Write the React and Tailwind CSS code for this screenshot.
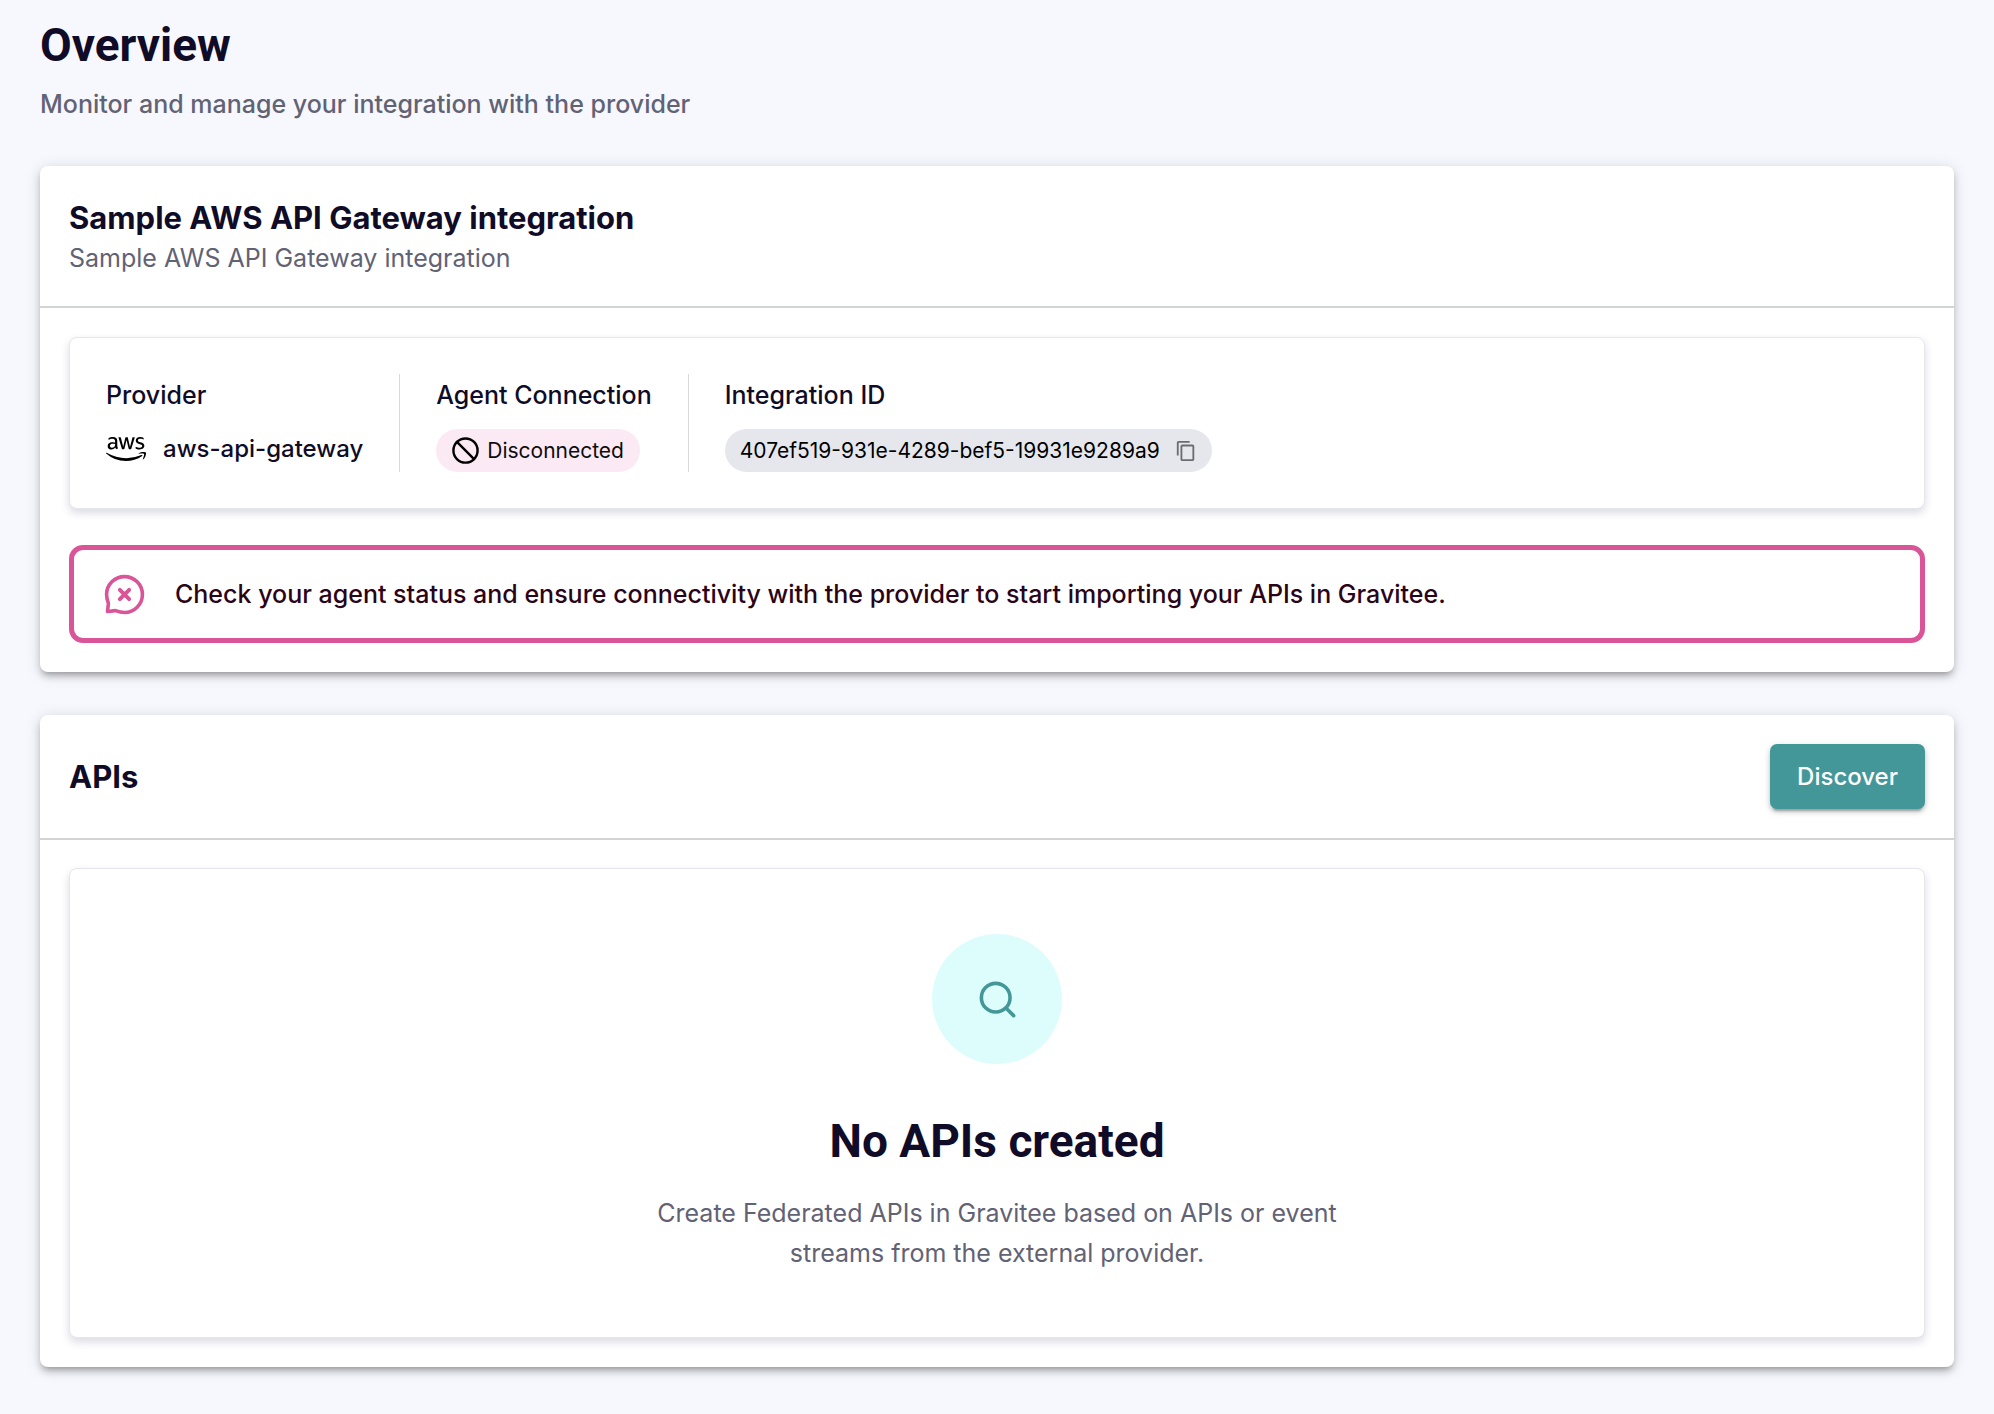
import React from "react";
import { FaAws } from "react-icons/fa";
import { MdContentCopy } from "react-icons/md";
import { Ban } from "lucide-react";

function BubbleErrorIcon() {
  return (
    <svg
      viewBox="0 0 24 24"
      className="size-[43px] shrink-0 text-[#da5597]"
      fill="none"
      stroke="currentColor"
      strokeWidth="2"
      strokeLinecap="round"
      strokeLinejoin="round"
      aria-hidden="true"
    >
      <path d="M12 22C17.523 22 22 17.523 22 12C22 6.477 17.523 2 12 2C6.477 2 2 6.477 2 12C2 13.821 2.487 15.529 3 17L2.5 21.5L7 21C8.471 21.513 10.179 22 12 22Z" />
      <path d="M9.4 14.6L14.6 9.4M9.4 9.4L14.6 14.6" strokeWidth="2.2" />
    </svg>
  );
}

function SearchIcon() {
  return (
    <svg
      viewBox="0 0 24 24"
      className="size-[43px] text-[#449798]"
      fill="none"
      stroke="currentColor"
      strokeWidth="2"
      strokeLinecap="round"
      strokeLinejoin="round"
      aria-hidden="true"
    >
      <circle cx="11" cy="11" r="8" />
      <path d="M17 17L21 21" />
    </svg>
  );
}

function Card({ children }) {
  return (
    <section className="rounded-lg bg-white shadow-[0_5px_5px_-4px_rgba(0,0,0,0.2),0_5px_7px_rgba(0,0,0,0.18),0_2px_16px_rgba(0,0,0,0.13)]">
      {children}
    </section>
  );
}

function Panel({ className, children }) {
  return (
    <div
      className={`rounded-lg border border-[#e6e6ee] bg-white shadow-[0_4px_8px_rgba(30,27,75,0.16)] ${className}`}
    >
      {children}
    </div>
  );
}

function Field({ label, children }) {
  return (
    <div className="flex flex-col items-start gap-[13px] border-r border-[#d8d8dd] px-9 first:pl-0 last:border-r-0">
      <h3 className="text-[25px] leading-[42px] font-medium">{label}</h3>
      {children}
    </div>
  );
}

export default function App() {
  return (
    <main className="min-h-screen bg-[#f7f8fd] px-10 pt-4 pb-12 font-['Inter',sans-serif] text-[#100c27]">
      <header className="mb-[42px]">
        <h1 className="font-['Roboto',sans-serif] text-[46px] leading-[58px] font-bold">Overview</h1>
        <p className="mt-[10px] text-[25px] leading-10 font-medium text-[#626275]">
          Monitor and manage your integration with the provider
        </p>
      </header>

      <div className="flex flex-col gap-[43px]">
        <Card>
          <div className="border-b-2 border-[#d3d3da] px-[29px] pt-8 pb-7">
            <h2 className="text-[31px] leading-10 font-bold">Sample AWS API Gateway integration</h2>
            <p className="text-[25px] leading-10 text-[#626275]">Sample AWS API Gateway integration</p>
          </div>
          <div className="flex flex-col gap-9 p-[29px]">
            <Panel className="flex flex-wrap p-9">
              <Field label="Provider">
                <div className="flex items-center gap-[17px] text-2xl leading-10 font-medium">
                  <FaAws className="size-10 text-black" aria-hidden="true" />
                  aws-api-gateway
                </div>
              </Field>
              <Field label="Agent Connection">
                <span className="flex h-[43px] items-center gap-[7px] rounded-full bg-[#fbe9f3] pr-4 pl-[15px] text-[21px] text-[#0d0d0d]">
                  <Ban className="size-[29px] text-black" aria-hidden="true" />
                  Disconnected
                </span>
              </Field>
              <Field label="Integration ID">
                <span className="flex h-[43px] items-center gap-[15px] rounded-full bg-[#e6e7ed] px-[15px] text-[21px] text-black">
                  407ef519-931e-4289-bef5-19931e9289a9
                  <button type="button" aria-label="Copy integration ID" className="text-[#6b6c72]">
                    <MdContentCopy className="size-[22px]" />
                  </button>
                </span>
              </Field>
            </Panel>
            <div
              role="alert"
              className="flex items-center gap-[29px] rounded-[14px] border-[5px] border-[#da5597] px-[29px] py-[22px] text-[25px] leading-11 font-medium text-[#2b0418]"
            >
              <BubbleErrorIcon />
              <p>
                Check your agent status and ensure connectivity with the provider to start importing your APIs in
                Gravitee.
              </p>
            </div>
          </div>
        </Card>

        <Card>
          <div className="flex items-center justify-between border-b-2 border-[#d3d3da] p-[29px]">
            <h2 className="text-[31px] leading-10 font-bold">APIs</h2>
            <button
              type="button"
              className="h-[65px] rounded-[7px] bg-[#449798] px-[27px] text-2xl font-medium text-white shadow-[0_5px_2px_-3px_rgba(0,0,0,0.2),0_3px_4px_rgba(0,0,0,0.16),0_2px_9px_rgba(0,0,0,0.12)]"
            >
              Discover
            </button>
          </div>
          <div className="px-[29px] pt-7 pb-[29px]">
            <Panel className="flex flex-col items-center px-9 pt-[65px] pb-16 text-center">
              <div className="flex size-[130px] items-center justify-center rounded-full bg-[#ddfdfd]">
                <SearchIcon />
              </div>
              <h2 className="mt-12 font-['Roboto',sans-serif] text-[46px] leading-[58px] font-bold">No APIs created</h2>
              <p className="mt-[23px] max-w-[710px] text-[25px] leading-10 text-[#626275]">
                Create Federated APIs in Gravitee based on APIs or event streams from the external provider.
              </p>
            </Panel>
          </div>
        </Card>
      </div>
    </main>
  );
}
